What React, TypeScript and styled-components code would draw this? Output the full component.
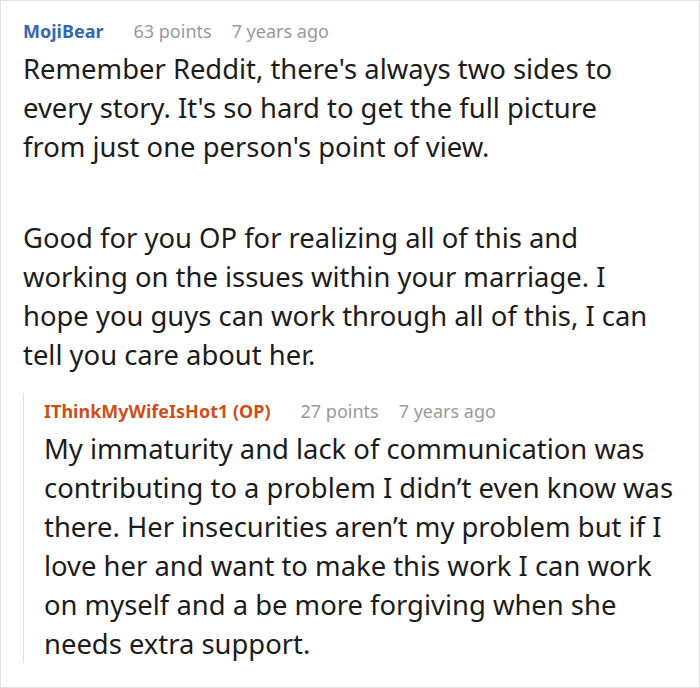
import React from "react";
import styled, { createGlobalStyle } from "styled-components";

const Global = createGlobalStyle`
  html, body { margin: 0; padding: 0; background: #fff; }
  body { font-family: "Noto Sans", "Open Sans", sans-serif; }
  * { box-sizing: border-box; }
`;

const Card = styled.div`
  width: 700px;
  height: 688px;
  border: 1px solid #e2e2e2;
  padding: 12px 38px 0 22px;
  overflow: hidden;
`;

const Meta = styled.div`
  display: flex;
  align-items: baseline;
  gap: 20px;
  font-size: 18px;
  line-height: 36px;
`;

const Author = styled.span<{ $op?: boolean }>`
  font-weight: 700;
  color: ${(p) => (p.$op ? "#cf4f1c" : "#3467ae")};
  margin-right: 10px;
`;

const Muted = styled.span`
  color: #999;
`;

const Body = styled.div`
  font-size: 27.4px;
  line-height: 39px;
  color: #1c1c1c;
  p { margin: 0; }
  p + p { margin-top: 52px; }
`;

const Reply = styled.div`
  margin-top: 19px;
  margin-right: -24px;
  border-left: 1px solid #e0e0e0;
  padding-left: 20px;
`;

export default function App() {
  return (
    <>
      <Global />
      <Card>
        <Meta>
          <Author>MojiBear</Author>
          <Muted>63 points</Muted>
          <Muted>7 years ago</Muted>
        </Meta>
        <Body>
          <p>
            Remember Reddit, there's always two sides to every story. It's so hard to get the full picture from just one person's point of view.
          </p>
          <p>
            Good for you OP for realizing all of this and working on the issues within your marriage. I hope you guys can work through all of this, I can tell you care about her.
          </p>
        </Body>
        <Reply>
          <Meta>
            <Author $op>IThinkMyWifeIsHot1 (OP)</Author>
            <Muted>27 points</Muted>
            <Muted>7 years ago</Muted>
          </Meta>
          <Body>
            <p>
              My immaturity and lack of communication was contributing to a problem I didn’t even know was there. Her insecurities aren’t my problem but if I love her and want to make this work I can work on myself and a be more forgiving when she needs extra support.
            </p>
          </Body>
        </Reply>
      </Card>
    </>
  );
}
